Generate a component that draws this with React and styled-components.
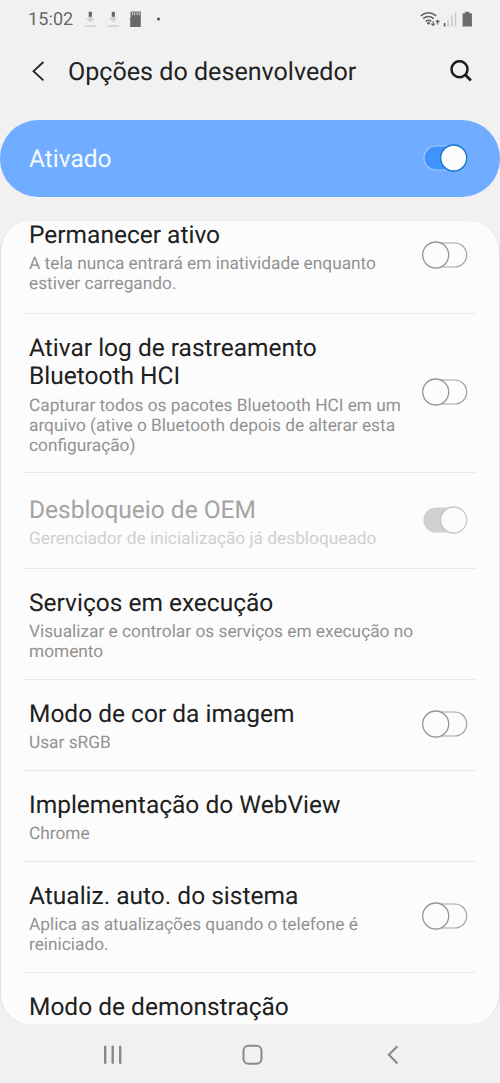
import React from "react";
import styled, { createGlobalStyle } from "styled-components";

const GlobalStyle = createGlobalStyle`
  * { box-sizing: border-box; }
  body { margin: 0; background: #f1f1f1; font-family: Roboto, "Liberation Sans", sans-serif; text-rendering: geometricPrecision; }
  h1, h2, p { margin: 0; font-weight: 400; }
  svg { display: block; flex: none; }
`;

const Screen = styled.div`
  width: 500px;
  height: 1083px;
  display: flex;
  flex-direction: column;
  background: #f1f1f1;
  overflow: hidden;
`;

const StatusBar = styled.div`
  height: 38px;
  flex: none;
  display: flex;
  justify-content: space-between;
  padding: 0 26px 0 28px;
`;

const StatusGroup = styled.div`
  display: flex;
  align-items: center;
`;

const Clock = styled.span`
  font-size: 18px;
  letter-spacing: 0.1px;
  color: #666;
  width: 54px;
  line-height: 38px;
  padding-top: 2px;
`;

const Header = styled.header`
  height: 81.5px;
  flex: none;
  display: flex;
  align-items: flex-start;
  padding: 17px 27px 0 31px;
`;

const HeaderTitle = styled.h1`
  flex: 1;
  margin-left: 23px;
  font-size: 25.1px;
  line-height: 36px;
  color: #222;
  white-space: nowrap;
`;

const HeaderIcon = styled.div`
  height: 34px;
  display: flex;
  align-items: center;
`;

const MasterCard = styled.section`
  height: 77.5px;
  flex: none;
  display: flex;
  align-items: center;
  justify-content: space-between;
  padding: 0 32px 1px 29px;
  border-radius: 38px;
  background: #70acff;
`;

const MasterLabel = styled.span`
  font-size: 24.5px;
  line-height: 30px;
  color: #f5faff;
  padding-top: 2px;
`;

const Panel = styled.main`
  height: 803px;
  flex: none;
  margin-top: 24px;
  border-radius: 30px;
  border: solid #e0e0e0;
  border-width: 0 1px;
  background: #fcfcfc;
  overflow: hidden;
`;

const List = styled.div`
  margin-top: -22px;
  padding: 0 23px;
`;

const Row = styled.div`
  height: ${(p) => p.$height}px;
  display: flex;
  align-items: center;
  justify-content: space-between;
  padding: 0 8px 0 5px;
  border-bottom: 1px solid #e9e9e9;
`;

const RowBody = styled.div`
  padding-top: 3.5px;
`;

const RowTitle = styled.h2`
  font-size: 24.5px;
  line-height: 28.4px;
  margin-bottom: 5px;
  color: ${(p) => (p.$disabled ? "#a4a4a4" : "#202020")};
  white-space: pre;
`;

const RowText = styled.p`
  font-size: 17.3px;
  line-height: 20px;
  color: ${(p) => (p.$disabled ? "#d0d0d0" : "#929292")};
  white-space: pre;
`;

const ToggleSlot = styled.div`
  padding-bottom: 1.8px;
`;

const NavBar = styled.nav`
  height: 59px;
  flex: none;
  display: flex;
  align-items: center;
  padding: 2px 0 0 102px;
`;

const NavItem = styled.div`
  flex: none;
  width: 140px;

  &:last-child {
    width: 22px;
  }
`;

const toggles = {
  off: { track: "#fcfcfc", trackLine: "#a3a3a3", thumb: "#fcfcfc", thumbLine: "#969696", on: false },
  locked: { track: "#d0d0d0", trackLine: "#d0d0d0", thumb: "#fcfcfc", thumbLine: "#c8c8c8", on: true },
  master: { track: "#4093fc", trackLine: "#a0c9ff", thumb: "#fcfcfc", thumbLine: "#1170cf", on: true },
};

function Toggle({ kind }) {
  const t = toggles[kind];
  return (
    <svg width="46" height="28" viewBox="0 0 46 28">
      <rect x={t.on ? 2 : 1.5} y="2" width={t.on ? 42 : 43.2} height="24" rx="12" fill={t.track} stroke={t.trackLine} strokeWidth="1.2" />
      <circle cx={t.on ? 31.7 : 13.7} cy="14" r="13" fill={t.thumb} stroke={t.thumbLine} strokeWidth="1.3" />
    </svg>
  );
}

function DownloadIcon() {
  return (
    <svg width="23" height="18" viewBox="0 0 23 18">
      <path d="M4 8h2.6V6.3h3.4V8h2.6L8.3 12.4z" fill="#d2d2d2" />
      <path d="M6.7 1.8h3.2v5H6.7z" fill="#666" />
      <path d="M2.5 16.2h11.5" stroke="#d2d2d2" strokeWidth="1.6" />
    </svg>
  );
}

function SdCardIcon() {
  return (
    <svg width="28" height="18" viewBox="0 0 28 18">
      <path d="M3.4 1.5h9.4v15.4H2.2V9.8l-.7-.7 1-1V2.4z" fill="#686868" />
      <path d="M4.4 2.2v3M6.7 2.2v3M9 2.2v3M11.2 2.2v3" stroke="#d8d8d8" strokeWidth="1" />
    </svg>
  );
}

function DotIcon() {
  return (
    <svg width="6" height="18" viewBox="0 0 6 18">
      <circle cx="2.5" cy="9" r="1.6" fill="#555" />
    </svg>
  );
}

function WifiIcon() {
  return (
    <svg width="22" height="18" viewBox="0 0 22 18">
      <g fill="none" stroke="#636363" strokeWidth="1.5">
        <path d="M.7 5.9Q8.3-.4 16.2 5.9" />
        <path d="M3.2 8.7q5.2-4.2 10.5 0" />
        <path d="M5.6 11.3q2.9-2.2 5.8 0" />
        <path d="M13.1 11.2v4.4M11.3 13.7l1.8 1.8 1.8-1.8M17.6 14.6V10.2m-1.8 2 1.8-1.9 1.8 1.9" strokeWidth="1.2" />
      </g>
      <circle cx="8.5" cy="13.2" r="1.4" fill="#636363" />
    </svg>
  );
}

function SignalIcon() {
  return (
    <svg width="18" height="18" viewBox="0 0 18 18">
      <path d="M2.6 16.5v-3.4" stroke="#555" strokeWidth="1.6" />
      <path d="M6.1 16.5V9.8M9.8 16.5V5.5M13.5 16.5V2.5" stroke="#cacaca" strokeWidth="1.6" />
    </svg>
  );
}

function BatteryIcon() {
  return (
    <svg width="14" height="18" viewBox="0 0 14 18">
      <path d="M5.2 1.8h4v1.4h2.7v13.4H2.6V3.2h2.6z" fill="#6b6b6b" />
    </svg>
  );
}

function BackIcon() {
  return (
    <svg width="14" height="22" viewBox="0 0 14 22">
      <path d="M12.4 1L2.5 10.2l9.9 9.2" fill="none" stroke="#202020" strokeWidth="1.8" />
    </svg>
  );
}

function SearchIcon() {
  return (
    <svg width="24" height="24" viewBox="0 0 24 24">
      <circle cx="10.5" cy="9.2" r="8" fill="none" stroke="#1d1d1d" strokeWidth="2.5" />
      <path d="M16.1 14.6l5.8 5.8" stroke="#1d1d1d" strokeWidth="2.8" />
    </svg>
  );
}

const settings = [
  { title: "Permanecer ativo", text: "A tela nunca entrará em inatividade enquanto\nestiver carregando.", toggle: "off", height: 115 },
  { title: "Ativar log de rastreamento\nBluetooth HCI", text: "Capturar todos os pacotes Bluetooth HCI em um\narquivo (ative o Bluetooth depois de alterar esta\nconfiguração)", toggle: "off", height: 159 },
  { title: "Desbloqueio de OEM", text: "Gerenciador de inicialização já desbloqueado", toggle: "locked", disabled: true, height: 96 },
  { title: "Serviços em execução", text: "Visualizar e controlar os serviços em execução no\nmomento", height: 111 },
  { title: "Modo de cor da imagem", text: "Usar sRGB", toggle: "off", height: 91 },
  { title: "Implementação do WebView", text: "Chrome", height: 91 },
  { title: "Atualiz. auto. do sistema", text: "Aplica as atualizações quando o telefone é\nreiniciado.", toggle: "off", height: 111 },
  { title: "Modo de demonstração", text: " ", height: 91 },
];

export default function App() {
  return (
    <Screen>
      <GlobalStyle />
      <StatusBar>
        <StatusGroup>
          <Clock>15:02</Clock>
          <DownloadIcon />
          <DownloadIcon />
          <SdCardIcon />
          <DotIcon />
        </StatusGroup>
        <StatusGroup>
          <WifiIcon />
          <SignalIcon />
          <BatteryIcon />
        </StatusGroup>
      </StatusBar>
      <Header>
        <HeaderIcon><BackIcon /></HeaderIcon>
        <HeaderTitle>Opções do desenvolvedor</HeaderTitle>
        <HeaderIcon><SearchIcon /></HeaderIcon>
      </Header>
      <MasterCard>
        <MasterLabel>Ativado</MasterLabel>
        <Toggle kind="master" />
      </MasterCard>
      <Panel>
        <List>
          {settings.map((s) => (
            <Row key={s.title} $height={s.height}>
              <RowBody>
                <RowTitle $disabled={s.disabled}>{s.title}</RowTitle>
                <RowText $disabled={s.disabled}>{s.text}</RowText>
              </RowBody>
              {s.toggle && (
                <ToggleSlot>
                  <Toggle kind={s.toggle} />
                </ToggleSlot>
              )}
            </Row>
          ))}
        </List>
      </Panel>
      <NavBar>
        <NavItem>
          <svg width="22" height="22" viewBox="0 0 22 22">
            <path d="M3.2 2.8v16M10.7 2.8v16M18.2 2.8v16" stroke="#898989" strokeWidth="2.4" strokeLinecap="round" />
          </svg>
        </NavItem>
        <NavItem>
          <svg width="22" height="22" viewBox="0 0 22 22">
            <rect x="1.5" y="1.8" width="18" height="18" rx="5" fill="none" stroke="#898989" strokeWidth="2" />
          </svg>
        </NavItem>
        <NavItem>
          <svg width="22" height="22" viewBox="0 0 22 22">
            <path d="M15.4 2.2L6.9 10.8l8.5 8.6" fill="none" stroke="#898989" strokeWidth="2.1" />
          </svg>
        </NavItem>
      </NavBar>
    </Screen>
  );
}
